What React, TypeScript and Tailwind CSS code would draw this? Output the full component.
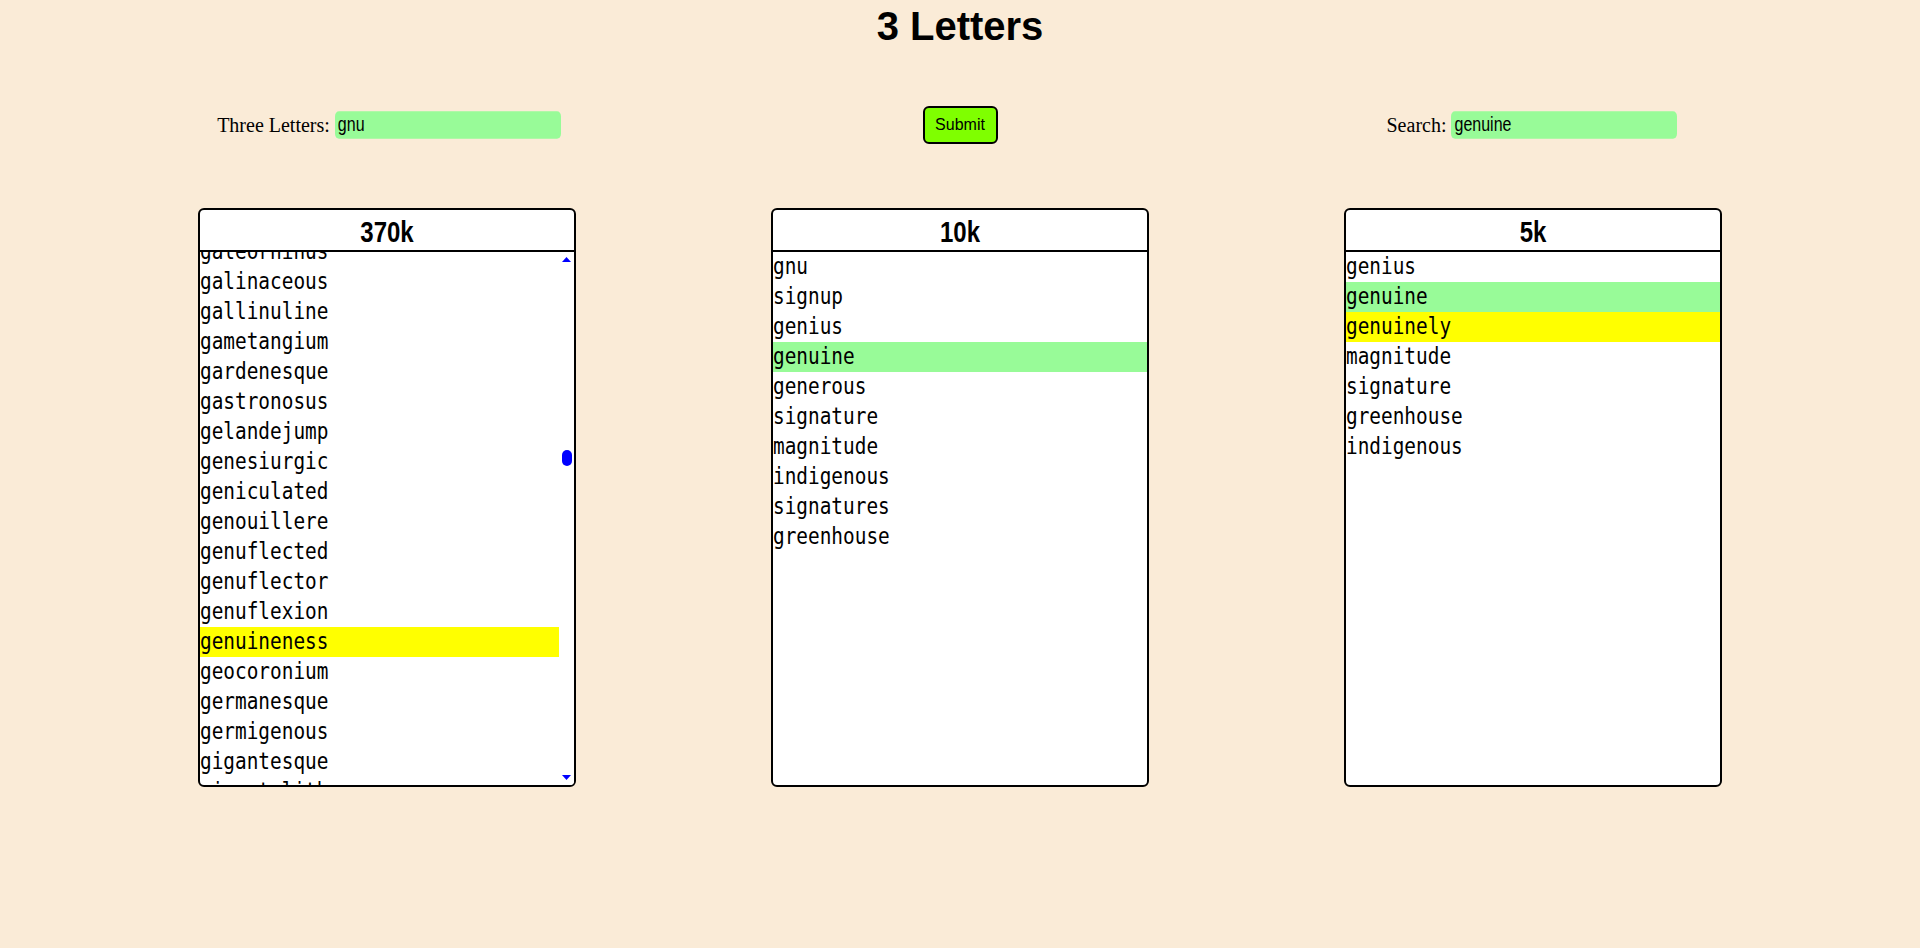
const bigWindow = [
  'galeorhinus',
  'galinaceous',
  'gallinuline',
  'gametangium',
  'gardenesque',
  'gastronosus',
  'gelandejump',
  'genesiurgic',
  'geniculated',
  'genouillere',
  'genuflected',
  'genuflector',
  'genuflexion',
  'genuineness',
  'geocoronium',
  'germanesque',
  'germigenous',
  'gigantesque',
  'gigantolith',
];

const tenK = [
  'gnu',
  'signup',
  'genius',
  'genuine',
  'generous',
  'signature',
  'magnitude',
  'indigenous',
  'signatures',
  'greenhouse',
];

const fiveK = ['genius', 'genuine', 'genuinely', 'magnitude', 'signature', 'greenhouse', 'indigenous'];

type Mark = 'match' | 'near' | undefined;

const wordFont = "font-['DejaVu_Sans_Mono',monospace] text-[19.4px] text-black";

function WordRow({ word, mark }: { word: string; mark?: Mark }) {
  const bg = mark === 'match' ? 'bg-[#98fb98]' : mark === 'near' ? 'bg-[#ffff00]' : '';
  return (
    <div className={`h-[30px] leading-[30px] whitespace-nowrap ${bg}`}>
      <span className="inline-block scale-y-[1.23]">{word}</span>
    </div>
  );
}

function Panel({ title, children }: { title: string; children: React.ReactNode }) {
  return (
    <div className="w-[378px] h-[579px] flex flex-col bg-white border-2 border-black rounded-[6px] overflow-hidden">
      <div className="h-[42px] shrink-0 flex items-center justify-center border-b-2 border-black">
        <span className="mt-[4px] inline-block scale-y-[1.25] font-['Liberation_Sans',Arial,sans-serif] font-bold text-[24px] leading-none text-black">
          {title}
        </span>
      </div>
      {children}
    </div>
  );
}

// blue scrollbar drawn beside the long list
function ScrollBar() {
  return (
    <div className="w-[15px] shrink-0 flex flex-col items-center bg-white">
      <div className="h-[15px] w-full flex items-center justify-center">
        <svg width="9" height="5" viewBox="0 0 9 5">
          <path d="M0 5 L4.5 0 L9 5 Z" fill="#0000ff" />
        </svg>
      </div>
      <div className="flex-1 w-full flex flex-col items-center">
        <div className="mt-[183px] w-[10px] h-[16px] rounded-full bg-[#0000ff]" />
      </div>
      <div className="h-[15px] w-full flex items-center justify-center">
        <svg width="9" height="5" viewBox="0 0 9 5">
          <path d="M0 0 L9 0 L4.5 5 Z" fill="#0000ff" />
        </svg>
      </div>
    </div>
  );
}

function TextField({ value }: { value: string }) {
  return (
    <input
      defaultValue={value}
      className="w-[226px] h-[22.4px] scale-y-[1.25] px-[3px] rounded-[4px] bg-[#98fb98] outline-none font-['Liberation_Sans',Arial,sans-serif] text-[16px] text-black"
    />
  );
}

export default function App() {
  return (
    <div className="w-full min-h-[948px] bg-[#faebd7] font-['Liberation_Sans',Arial,sans-serif]">
      <h1 className="pt-[3px] text-center text-[40px] leading-[46px] font-bold text-black">3 Letters</h1>

      {/* controls */}
      <div className="mt-[57px] flex justify-center gap-[195px]">
        <div className="w-[378px] h-[38px] flex items-center justify-center pl-[4px]">
          <label className="font-['Liberation_Serif',serif] text-[20px] text-black mr-[5px]">Three Letters:</label>
          <TextField value="gnu" />
        </div>
        <div className="w-[378px] h-[38px] flex items-center justify-center">
          <button className="w-[75px] h-[38px] bg-[#7fff00] border-2 border-black rounded-[6px] text-[16px] text-black">
            Submit
          </button>
        </div>
        <div className="w-[378px] h-[38px] flex items-center justify-center pr-[2px]">
          <label className="font-['Liberation_Serif',serif] text-[20px] text-black mr-[5px]">Search:</label>
          <TextField value="genuine" />
        </div>
      </div>

      {/* word lists */}
      <div className="mt-[64px] flex justify-center gap-[195px]">
        <Panel title="370k">
          <div className="flex-1 flex min-h-0">
            <div className={`flex-1 overflow-hidden ${wordFont}`}>
              <div className="-mt-[15px]">
                {bigWindow.map(w => (
                  <WordRow key={w} word={w} mark={w === 'genuineness' ? 'near' : undefined} />
                ))}
              </div>
            </div>
            <ScrollBar />
          </div>
        </Panel>

        <Panel title="10k">
          <div className={`flex-1 overflow-hidden ${wordFont}`}>
            {tenK.map(w => (
              <WordRow key={w} word={w} mark={w === 'genuine' ? 'match' : undefined} />
            ))}
          </div>
        </Panel>

        <Panel title="5k">
          <div className={`flex-1 overflow-hidden ${wordFont}`}>
            {fiveK.map(w => (
              <WordRow
                key={w}
                word={w}
                mark={w === 'genuine' ? 'match' : w === 'genuinely' ? 'near' : undefined}
              />
            ))}
          </div>
        </Panel>
      </div>
    </div>
  );
}
